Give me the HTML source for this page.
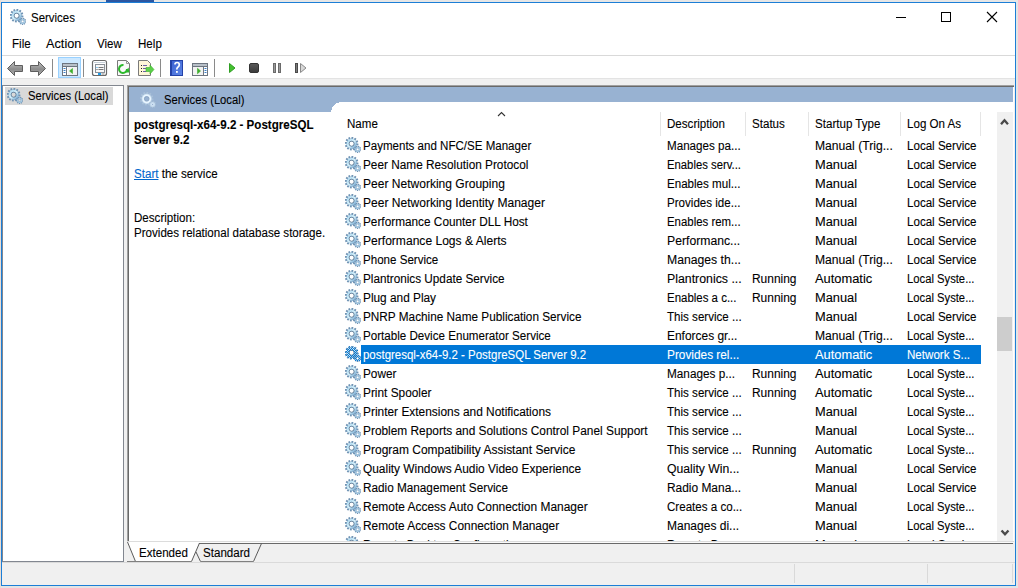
<!DOCTYPE html>
<html><head><meta charset="utf-8">
<style>
*{margin:0;padding:0;box-sizing:border-box}
html,body{width:1018px;height:588px;overflow:hidden;background:#E4E4E4;font-family:"Liberation Sans", sans-serif;font-size:12px;color:#000;-webkit-text-stroke:0.1px currentColor}
.a{position:absolute}
.t{position:absolute;white-space:nowrap;line-height:19px;transform:scaleX(.965);transform-origin:0 0}
.rt{position:absolute;white-space:nowrap;line-height:19px;height:19px;transform:scaleX(.965);transform-origin:0 0}
.sx{transform:scaleX(.965);transform-origin:0 0}
.gi{position:absolute}
</style></head><body>
<svg width="0" height="0" style="position:absolute">
<defs>
<linearGradient id="gg" x1="0.1" y1="0.1" x2="0.9" y2="0.9">
<stop offset="0" stop-color="#B4DDF2"/><stop offset="0.5" stop-color="#D4F0FB"/><stop offset="1" stop-color="#8AB8DA"/>
</linearGradient>
<symbol id="gear" viewBox="0 0 16 16">
<path d="M11.49,6.34 L13.50,6.70 L13.27,8.47 L11.23,8.30 L11.01,8.83 L12.58,10.15 L11.49,11.57 L9.81,10.40 L9.35,10.75 L10.05,12.68 L8.40,13.36 L7.53,11.51 L6.96,11.59 L6.60,13.60 L4.83,13.37 L5.00,11.33 L4.47,11.11 L3.15,12.68 L1.73,11.59 L2.90,9.91 L2.55,9.45 L0.62,10.15 L-0.06,8.50 L1.79,7.63 L1.71,7.06 L-0.30,6.70 L-0.07,4.93 L1.97,5.10 L2.19,4.57 L0.62,3.25 L1.71,1.83 L3.39,3.00 L3.85,2.65 L3.15,0.72 L4.80,0.04 L5.67,1.89 L6.24,1.81 L6.60,-0.20 L8.37,0.03 L8.20,2.07 L8.73,2.29 L10.05,0.72 L11.47,1.81 L10.30,3.49 L10.65,3.95 L12.58,3.25 L13.26,4.90 L11.41,5.77Z M8.90,6.70 A2.3,2.3 0 1 0 4.30,6.70 A2.3,2.3 0 1 0 8.90,6.70Z" fill="#6F93B4" fill-rule="evenodd"/>
<circle cx="6.6" cy="6.7" r="3.85" fill="none" stroke="url(#gg)" stroke-width="2.4"/>
<circle cx="6.6" cy="6.7" r="2.55" fill="none" stroke="#5F7890" stroke-width="0.7"/>
<path d="M15.19,12.22 L16.30,12.50 L16.05,13.75 L14.92,13.58 L14.70,13.93 L15.37,14.85 L14.37,15.65 L13.62,14.79 L13.23,14.92 L13.14,16.06 L11.87,16.03 L11.84,14.89 L11.46,14.74 L10.66,15.55 L9.71,14.71 L10.42,13.82 L10.23,13.46 L9.09,13.57 L8.90,12.31 L10.02,12.08 L10.10,11.69 L9.16,11.04 L9.82,9.95 L10.83,10.50 L11.14,10.25 L10.84,9.15 L12.05,8.74 L12.46,9.80 L12.87,9.81 L13.34,8.77 L14.53,9.24 L14.16,10.32 L14.47,10.59 L15.50,10.10 L16.11,11.22 L15.13,11.81Z M13.80,12.40 A1.2,1.2 0 1 0 11.40,12.40 A1.2,1.2 0 1 0 13.80,12.40Z" fill="#6F93B4" fill-rule="evenodd"/>
<circle cx="12.6" cy="12.4" r="1.9" fill="none" stroke="#A9CDE6" stroke-width="1.2"/>
</symbol>
<pattern id="dith" width="2" height="2" patternUnits="userSpaceOnUse"><rect x="0" y="0" width="1" height="1" fill="#0078D7"/><rect x="1" y="1" width="1" height="1" fill="#0078D7"/></pattern>
<symbol id="gearsel" viewBox="0 0 16 16">
<path d="M11.49,6.34 L13.50,6.70 L13.27,8.47 L11.23,8.30 L11.01,8.83 L12.58,10.15 L11.49,11.57 L9.81,10.40 L9.35,10.75 L10.05,12.68 L8.40,13.36 L7.53,11.51 L6.96,11.59 L6.60,13.60 L4.83,13.37 L5.00,11.33 L4.47,11.11 L3.15,12.68 L1.73,11.59 L2.90,9.91 L2.55,9.45 L0.62,10.15 L-0.06,8.50 L1.79,7.63 L1.71,7.06 L-0.30,6.70 L-0.07,4.93 L1.97,5.10 L2.19,4.57 L0.62,3.25 L1.71,1.83 L3.39,3.00 L3.85,2.65 L3.15,0.72 L4.80,0.04 L5.67,1.89 L6.24,1.81 L6.60,-0.20 L8.37,0.03 L8.20,2.07 L8.73,2.29 L10.05,0.72 L11.47,1.81 L10.30,3.49 L10.65,3.95 L12.58,3.25 L13.26,4.90 L11.41,5.77Z M8.90,6.70 A2.3,2.3 0 1 0 4.30,6.70 A2.3,2.3 0 1 0 8.90,6.70Z" fill="url(#dith)" fill-rule="evenodd"/>
<path d="M15.19,12.22 L16.30,12.50 L16.05,13.75 L14.92,13.58 L14.70,13.93 L15.37,14.85 L14.37,15.65 L13.62,14.79 L13.23,14.92 L13.14,16.06 L11.87,16.03 L11.84,14.89 L11.46,14.74 L10.66,15.55 L9.71,14.71 L10.42,13.82 L10.23,13.46 L9.09,13.57 L8.90,12.31 L10.02,12.08 L10.10,11.69 L9.16,11.04 L9.82,9.95 L10.83,10.50 L11.14,10.25 L10.84,9.15 L12.05,8.74 L12.46,9.80 L12.87,9.81 L13.34,8.77 L14.53,9.24 L14.16,10.32 L14.47,10.59 L15.50,10.10 L16.11,11.22 L15.13,11.81Z M13.80,12.40 A1.2,1.2 0 1 0 11.40,12.40 A1.2,1.2 0 1 0 13.80,12.40Z" fill="url(#dith)" fill-rule="evenodd"/>
</symbol>
<symbol id="gearg" viewBox="0 0 16 16">
<path d="M11.49,6.34 L13.50,6.70 L13.27,8.47 L11.23,8.30 L11.01,8.83 L12.58,10.15 L11.49,11.57 L9.81,10.40 L9.35,10.75 L10.05,12.68 L8.40,13.36 L7.53,11.51 L6.96,11.59 L6.60,13.60 L4.83,13.37 L5.00,11.33 L4.47,11.11 L3.15,12.68 L1.73,11.59 L2.90,9.91 L2.55,9.45 L0.62,10.15 L-0.06,8.50 L1.79,7.63 L1.71,7.06 L-0.30,6.70 L-0.07,4.93 L1.97,5.10 L2.19,4.57 L0.62,3.25 L1.71,1.83 L3.39,3.00 L3.85,2.65 L3.15,0.72 L4.80,0.04 L5.67,1.89 L6.24,1.81 L6.60,-0.20 L8.37,0.03 L8.20,2.07 L8.73,2.29 L10.05,0.72 L11.47,1.81 L10.30,3.49 L10.65,3.95 L12.58,3.25 L13.26,4.90 L11.41,5.77Z" fill="#A9C0D8"/>
<circle cx="6.7" cy="6.8" r="5.1" fill="#C4DAEE"/>
<circle cx="6.7" cy="6.8" r="3.6" fill="none" stroke="#EAF6FF" stroke-width="1.6"/>
<circle cx="6.7" cy="6.8" r="2.3" fill="#98B2D2" stroke="#7E97B5" stroke-width="0.6"/>
<path d="M15.19,12.22 L16.30,12.50 L16.05,13.75 L14.92,13.58 L14.70,13.93 L15.37,14.85 L14.37,15.65 L13.62,14.79 L13.23,14.92 L13.14,16.06 L11.87,16.03 L11.84,14.89 L11.46,14.74 L10.66,15.55 L9.71,14.71 L10.42,13.82 L10.23,13.46 L9.09,13.57 L8.90,12.31 L10.02,12.08 L10.10,11.69 L9.16,11.04 L9.82,9.95 L10.83,10.50 L11.14,10.25 L10.84,9.15 L12.05,8.74 L12.46,9.80 L12.87,9.81 L13.34,8.77 L14.53,9.24 L14.16,10.32 L14.47,10.59 L15.50,10.10 L16.11,11.22 L15.13,11.81Z" fill="#A9C0D8"/>
<circle cx="12.6" cy="12.5" r="2.5" fill="#C4DAEE"/>
<circle cx="12.6" cy="12.5" r="1.1" fill="#98B2D2" stroke="#E0EEFA" stroke-width="0.8"/>
</symbol>
</defs></svg>

<!-- desktop bits -->
<div class="a" style="left:0;top:0;width:1018px;height:2px;background:#E6E6E6"></div>
<div class="a" style="left:106px;top:0;width:48px;height:2px;background:#2C56A0"></div>
<div class="a" style="left:0;top:0;width:1px;height:588px;background:#E8DDD5"></div>

<!-- window -->
<div class="a" id="win" style="left:1px;top:2px;width:1015px;height:584px;border:1px solid #1C7ED6;background:#F0F0F0;overflow:hidden">
</div>

<!-- title+menu white -->
<div class="a" style="left:2px;top:3px;width:1013px;height:52px;background:#fff"></div>
<svg class="gi" style="left:10px;top:9px" width="16" height="16"><use href="#gear"/></svg>
<div class="t" style="left:31px;top:9px;transform:scaleX(.955)">Services</div>
<!-- window controls -->
<div class="a" style="left:896px;top:17px;width:10px;height:1px;background:#000"></div>
<div class="a" style="left:941px;top:12px;width:10px;height:10px;border:1px solid #000"></div>
<svg class="a" style="left:986px;top:11px" width="12" height="12"><path d="M1,1 L11,11 M11,1 L1,11" stroke="#000" stroke-width="1.1"/></svg>
<!-- menu -->
<div class="t" style="left:12px;top:35px;">File</div><div class="t" style="left:46px;top:35px;transform:scaleX(1.06)">Action</div><div class="t" style="left:97px;top:35px;">View</div><div class="t" style="left:138px;top:35px;">Help</div>
<div class="a" style="left:2px;top:55px;width:1013px;height:1px;background:#D9D9D9"></div>
<!-- toolbar -->
<div class="a" style="left:2px;top:56px;width:1013px;height:22px;background:#fff"></div>
<div class="a" style="left:2px;top:78px;width:1013px;height:1px;background:#E3E3E3"></div>
<svg class="a" style="left:0;top:0" width="320" height="80">
<defs>
<linearGradient id="ag" x1="0" y1="0" x2="0" y2="1"><stop offset="0" stop-color="#C4C4C4"/><stop offset="0.55" stop-color="#8C8C8C"/><stop offset="1" stop-color="#B0B0B0"/></linearGradient>
<linearGradient id="hb" x1="0" y1="0" x2="1" y2="1"><stop offset="0" stop-color="#3A5FD0"/><stop offset="1" stop-color="#5E88E8"/></linearGradient>
<linearGradient id="sg" x1="0" y1="0" x2="0" y2="1"><stop offset="0" stop-color="#5A5A5A"/><stop offset="1" stop-color="#3A3A3A"/></linearGradient>
</defs>
<!-- back / forward -->
<path d="M7.5,68.5 L14.5,61.5 L14.5,65.5 L22.5,65.5 L22.5,71.5 L14.5,71.5 L14.5,75.5 Z" fill="url(#ag)" stroke="#5E5E5E" stroke-width="1" stroke-linejoin="round"/>
<path d="M45.5,68.5 L38.5,61.5 L38.5,65.5 L30.5,65.5 L30.5,71.5 L38.5,71.5 L38.5,75.5 Z" fill="url(#ag)" stroke="#5E5E5E" stroke-width="1" stroke-linejoin="round"/>
<rect x="52" y="59" width="1" height="18" fill="#8A8A8A"/>
<!-- pressed console tree button -->
<rect x="58.5" y="57.5" width="22" height="20" fill="#CCE8FF" stroke="#99D1FF"/>
<rect x="62.5" y="63.5" width="15" height="12" fill="#fff" stroke="#6D7580"/>
<rect x="63" y="64" width="14" height="2" fill="#B8C0C8"/>
<line x1="63" y1="66.5" x2="77" y2="66.5" stroke="#6D7580"/>
<line x1="66.5" y1="67" x2="66.5" y2="75" stroke="#6D7580"/>
<rect x="68" y="67" width="9" height="8" fill="#F2F2F2"/>
<rect x="63.5" y="68" width="2" height="1" fill="#3C80C8"/><rect x="63.5" y="70" width="2" height="1" fill="#3C80C8"/><rect x="63.5" y="72" width="2" height="1" fill="#3C80C8"/>
<path d="M69.5,71 L72.5,68.5 L72.5,73.5 Z" fill="#3DAE2B" stroke="#3DAE2B" stroke-width="0.6"/>
<rect x="83" y="59" width="1" height="18" fill="#8A8A8A"/>
<!-- properties -->
<rect x="92.5" y="60.5" width="14" height="15" rx="2" fill="#fff" stroke="#6A6A6A" stroke-width="1.2"/>
<rect x="94" y="62" width="11" height="1" fill="#C8D0D8"/>
<rect x="95.5" y="64.5" width="9" height="8" fill="#F8F8F8" stroke="#8A9098"/>
<rect x="96.5" y="67" width="1" height="1" fill="#1E9BEA"/><rect x="98.5" y="67" width="5" height="1" fill="#777"/>
<rect x="96.5" y="69" width="1" height="1" fill="#555"/><rect x="98.5" y="69" width="5" height="1" fill="#777"/>
<rect x="98" y="73" width="3" height="2" fill="#1E9BEA"/><rect x="101.5" y="73" width="3" height="2" fill="#C0C0C0"/>
<!-- refresh doc -->
<path d="M117.5,60.5 L126.5,60.5 L129.5,63.5 L129.5,75.5 L117.5,75.5 Z" fill="#FAFAFA" stroke="#7A7A7A"/>
<path d="M126.5,60.5 L126.5,63.5 L129.5,63.5" fill="none" stroke="#9A9A9A"/>
<path d="M127,69 A4,4 0 1 1 123.5,65" fill="none" stroke="#2DB82D" stroke-width="2"/>
<path d="M124.5,72.5 L129.5,72.5 L128.5,67.5 Z" fill="#2DB82D"/>
<!-- export doc -->
<path d="M138.5,60.5 L147.5,60.5 L150.5,63.5 L150.5,75.5 L138.5,75.5 Z" fill="#FFF6D8" stroke="#7A7A7A"/>
<rect x="141" y="65" width="1" height="1" fill="#222"/><rect x="143" y="65" width="4" height="1" fill="#6A60A8"/>
<rect x="141" y="68" width="1" height="1" fill="#222"/><rect x="143" y="68" width="3" height="1" fill="#6A60A8"/>
<rect x="141" y="71" width="1" height="1" fill="#222"/><rect x="143" y="71" width="3" height="1" fill="#6A60A8"/>
<path d="M146,67.5 L150,67.5 L150,65 L154,69.5 L150,74 L150,71.5 L146,71.5 Z" fill="#5CD04A" stroke="#3DAE2B" stroke-width="0.6"/>
<rect x="160" y="59" width="1" height="18" fill="#8A8A8A"/>
<!-- help -->
<rect x="170" y="60" width="13" height="16" fill="url(#hb)"/>
<rect x="170" y="60" width="2" height="16" fill="#2442A8"/>
<rect x="170.5" y="60.5" width="12" height="15" fill="none" stroke="#2442A8" stroke-width="1"/>
<path d="M175,64.5 Q175,62.5 177,62.5 Q179.3,62.5 179.3,64.8 Q179.3,66.3 177.8,67.2 Q176.8,67.8 176.8,69.5" fill="none" stroke="#fff" stroke-width="1.7"/>
<rect x="176" y="71" width="1.8" height="1.8" fill="#fff"/>
<!-- action pane icon -->
<rect x="192.5" y="63.5" width="15" height="12" fill="#fff" stroke="#6D7580"/>
<rect x="193" y="64" width="14" height="2" fill="#B8C0C8"/>
<line x1="193" y1="66.5" x2="207" y2="66.5" stroke="#6D7580"/>
<line x1="203.5" y1="67" x2="203.5" y2="75" stroke="#6D7580"/>
<rect x="193" y="67" width="10" height="8" fill="#F2F2F2"/>
<rect x="204.5" y="68" width="2" height="1" fill="#3C80C8"/><rect x="204.5" y="70" width="2" height="1" fill="#3C80C8"/><rect x="204.5" y="72" width="2" height="1" fill="#3C80C8"/>
<path d="M197.5,68.3 L200.5,71 L197.5,73.7 Z" fill="#3DAE2B" stroke="#3DAE2B" stroke-width="0.6"/>
<rect x="214" y="59" width="1" height="18" fill="#8A8A8A"/>
<!-- play stop pause restart -->
<path d="M229.5,63.5 L235,68 L229.5,72.5 Z" fill="#45C030" stroke="#2E9E22" stroke-width="1" stroke-linejoin="round"/>
<rect x="249.5" y="63.5" width="9" height="9" rx="1.5" fill="url(#sg)" stroke="#333" stroke-width="1"/>
<rect x="273.5" y="63.5" width="2" height="9" fill="#9A9A9A" stroke="#6A6A6A" stroke-width="1"/>
<rect x="278.5" y="63.5" width="2" height="9" fill="#9A9A9A" stroke="#6A6A6A" stroke-width="1"/>
<rect x="295.5" y="63.5" width="2" height="9" fill="#7A7A7A" stroke="#4A4A4A" stroke-width="1"/>
<path d="M300.5,63.5 L306,68 L300.5,72.5 Z" fill="#D8D8D8" stroke="#8A8A8A" stroke-width="1" stroke-linejoin="round"/>
</svg>


<!-- left tree pane -->
<div class="a" style="left:2px;top:85px;width:122px;height:477px;background:#fff;border:1px solid #828790"></div>
<div class="a" style="left:5px;top:87px;width:108px;height:18px;background:#D9D9D9"></div>
<svg class="gi" style="left:7px;top:88px" width="16" height="16"><use href="#gear"/></svg>
<div class="t" style="left:28px;top:87px;transform:scaleX(.935)">Services (Local)</div>

<!-- right pane -->
<div class="a" style="left:127px;top:85px;width:887px;height:457px;background:#fff;border-left:1px solid #A0A0A0;border-top:1px solid #A0A0A0"></div>
<div class="a" style="left:128px;top:86px;width:886px;height:456px;border-left:1px solid #696969;border-top:1px solid #696969"></div>
<div class="a" style="left:129px;top:87px;width:884px;height:25px;background:#98B2D2"></div>
<svg class="gi" style="left:140px;top:92px" width="16" height="16"><use href="#gearg"/></svg>
<div class="t" style="left:164px;top:91px;transform:scaleX(.935)">Services (Local)</div>
<!-- detail -->
<div class="a sx" style="left:134px;top:118px;font-weight:bold;line-height:15px;white-space:nowrap">postgresql-x64-9.2 - PostgreSQL<br>Server 9.2</div>
<div class="a sx" style="left:134px;top:167px;white-space:nowrap;line-height:15px"><span style="color:#0066CC;text-decoration:underline">Start</span> the service</div>
<div class="a sx" style="left:134px;top:211px;white-space:nowrap;line-height:15px">Description:<br>Provides relational database storage.</div>

<!-- list -->
<div class="a" style="left:331px;top:102px;width:682px;height:439px;background:#fff;overflow:hidden">
<svg class="a" style="left:0;top:0" width="10" height="10" shape-rendering="crispEdges"><path d="M0,0 L8,0 L8,1 L5,1 L5,2 L4,2 L4,3 L3,3 L3,4 L2,4 L2,5 L1,5 L1,8 L0,8 Z" fill="#98B2D2"/></svg>
<svg class="a" style="left:166px;top:9px" width="9" height="7"><path d="M1,5 L4.5,1.5 L8,5" fill="none" stroke="#333" stroke-width="1.1"/></svg>
<div class="rt" style="left:16px;top:11px;line-height:23px;height:23px">Name</div>
<div class="rt" style="left:336px;top:11px;line-height:23px;height:23px">Description</div>
<div class="rt" style="left:421px;top:11px;line-height:23px;height:23px">Status</div>
<div class="rt" style="left:484px;top:11px;line-height:23px;height:23px">Startup Type</div>
<div class="rt" style="left:576px;top:11px;line-height:23px;height:23px">Log On As</div>
<div class="a" style="left:329px;top:10px;width:1px;height:24px;background:#E5E5E5"></div><div class="a" style="left:414px;top:10px;width:1px;height:24px;background:#E5E5E5"></div><div class="a" style="left:477px;top:10px;width:1px;height:24px;background:#E5E5E5"></div><div class="a" style="left:569px;top:10px;width:1px;height:24px;background:#E5E5E5"></div><div class="a" style="left:649px;top:10px;width:1px;height:24px;background:#E5E5E5"></div>
<svg class="gi" style="left:14px;top:35px" width="16" height="16"><use href="#gear"/></svg>
<div class="rt" style="left:32px;top:35px;color:#000;transform:scaleX(0.9627)">Payments and NFC/SE Manager</div>
<div class="rt" style="left:336px;top:35px;color:#000;transform:scaleX(0.9691)">Manages pa...</div>
<div class="rt" style="left:484px;top:35px;color:#000;transform:scaleX(1.0112)">Manual (Trig...</div>
<div class="rt" style="left:576px;top:35px;color:#000;transform:scaleX(0.9650)">Local Service</div>
<svg class="gi" style="left:14px;top:54px" width="16" height="16"><use href="#gear"/></svg>
<div class="rt" style="left:32px;top:54px;color:#000;transform:scaleX(0.9837)">Peer Name Resolution Protocol</div>
<div class="rt" style="left:336px;top:54px;color:#000;transform:scaleX(0.9425)">Enables serv...</div>
<div class="rt" style="left:484px;top:54px;color:#000;transform:scaleX(1.0698)">Manual</div>
<div class="rt" style="left:576px;top:54px;color:#000;transform:scaleX(0.9650)">Local Service</div>
<svg class="gi" style="left:14px;top:73px" width="16" height="16"><use href="#gear"/></svg>
<div class="rt" style="left:32px;top:73px;color:#000;transform:scaleX(1.0032)">Peer Networking Grouping</div>
<div class="rt" style="left:336px;top:73px;color:#000;transform:scaleX(0.9650)">Enables mul...</div>
<div class="rt" style="left:484px;top:73px;color:#000;transform:scaleX(1.0698)">Manual</div>
<div class="rt" style="left:576px;top:73px;color:#000;transform:scaleX(0.9650)">Local Service</div>
<svg class="gi" style="left:14px;top:92px" width="16" height="16"><use href="#gear"/></svg>
<div class="rt" style="left:32px;top:92px;color:#000;transform:scaleX(1.0029)">Peer Networking Identity Manager</div>
<div class="rt" style="left:336px;top:92px;color:#000;transform:scaleX(0.9650)">Provides ide...</div>
<div class="rt" style="left:484px;top:92px;color:#000;transform:scaleX(1.0698)">Manual</div>
<div class="rt" style="left:576px;top:92px;color:#000;transform:scaleX(0.9650)">Local Service</div>
<svg class="gi" style="left:14px;top:111px" width="16" height="16"><use href="#gear"/></svg>
<div class="rt" style="left:32px;top:111px;color:#000;transform:scaleX(0.9837)">Performance Counter DLL Host</div>
<div class="rt" style="left:336px;top:111px;color:#000;transform:scaleX(0.9516)">Enables rem...</div>
<div class="rt" style="left:484px;top:111px;color:#000;transform:scaleX(1.0698)">Manual</div>
<div class="rt" style="left:576px;top:111px;color:#000;transform:scaleX(0.9650)">Local Service</div>
<svg class="gi" style="left:14px;top:130px" width="16" height="16"><use href="#gear"/></svg>
<div class="rt" style="left:32px;top:130px;color:#000;transform:scaleX(1.0057)">Performance Logs &amp; Alerts</div>
<div class="rt" style="left:336px;top:130px;color:#000;transform:scaleX(1.0169)">Performanc...</div>
<div class="rt" style="left:484px;top:130px;color:#000;transform:scaleX(1.0698)">Manual</div>
<div class="rt" style="left:576px;top:130px;color:#000;transform:scaleX(0.9650)">Local Service</div>
<svg class="gi" style="left:14px;top:149px" width="16" height="16"><use href="#gear"/></svg>
<div class="rt" style="left:32px;top:149px;color:#000;transform:scaleX(0.9650)">Phone Service</div>
<div class="rt" style="left:336px;top:149px;color:#000;transform:scaleX(1.0169)">Manages th...</div>
<div class="rt" style="left:484px;top:149px;color:#000;transform:scaleX(1.0112)">Manual (Trig...</div>
<div class="rt" style="left:576px;top:149px;color:#000;transform:scaleX(0.9650)">Local Service</div>
<svg class="gi" style="left:14px;top:168px" width="16" height="16"><use href="#gear"/></svg>
<div class="rt" style="left:32px;top:168px;color:#000;transform:scaleX(0.9784)">Plantronics Update Service</div>
<div class="rt" style="left:336px;top:168px;color:#000;transform:scaleX(1.0269)">Plantronics ...</div>
<div class="rt" style="left:421px;top:168px;color:#000;transform:scaleX(0.9949)">Running</div>
<div class="rt" style="left:484px;top:168px;color:#000;transform:scaleX(1.0722)">Automatic</div>
<div class="rt" style="left:576px;top:168px;color:#000;transform:scaleX(0.9370)">Local Syste...</div>
<svg class="gi" style="left:14px;top:187px" width="16" height="16"><use href="#gear"/></svg>
<div class="rt" style="left:32px;top:187px;color:#000;transform:scaleX(0.9860)">Plug and Play</div>
<div class="rt" style="left:336px;top:187px;color:#000;transform:scaleX(0.9549)">Enables a c...</div>
<div class="rt" style="left:421px;top:187px;color:#000;transform:scaleX(0.9949)">Running</div>
<div class="rt" style="left:484px;top:187px;color:#000;transform:scaleX(1.0698)">Manual</div>
<div class="rt" style="left:576px;top:187px;color:#000;transform:scaleX(0.9370)">Local Syste...</div>
<svg class="gi" style="left:14px;top:206px" width="16" height="16"><use href="#gear"/></svg>
<div class="rt" style="left:32px;top:206px;color:#000;transform:scaleX(0.9818)">PNRP Machine Name Publication Service</div>
<div class="rt" style="left:336px;top:206px;color:#000;transform:scaleX(0.9650)">This service ...</div>
<div class="rt" style="left:484px;top:206px;color:#000;transform:scaleX(1.0698)">Manual</div>
<div class="rt" style="left:576px;top:206px;color:#000;transform:scaleX(0.9650)">Local Service</div>
<svg class="gi" style="left:14px;top:225px" width="16" height="16"><use href="#gear"/></svg>
<div class="rt" style="left:32px;top:225px;color:#000;transform:scaleX(0.9676)">Portable Device Enumerator Service</div>
<div class="rt" style="left:336px;top:225px;color:#000;transform:scaleX(0.9947)">Enforces gr...</div>
<div class="rt" style="left:484px;top:225px;color:#000;transform:scaleX(1.0112)">Manual (Trig...</div>
<div class="rt" style="left:576px;top:225px;color:#000;transform:scaleX(0.9370)">Local Syste...</div>
<div style="position:absolute;left:30px;top:243px;width:620px;height:19px;background:#0078D7"></div>
<svg class="gi" style="left:14px;top:244px" width="16" height="16"><use href="#gear"/></svg>
<svg class="gi" style="left:14px;top:244px" width="16" height="16"><use href="#gearsel"/></svg>
<div class="rt" style="left:32px;top:244px;color:#fff;transform:scaleX(0.9550)">postgresql-x64-9.2 - PostgreSQL Server 9.2</div>
<div class="rt" style="left:336px;top:244px;color:#fff;transform:scaleX(0.9863)">Provides rel...</div>
<div class="rt" style="left:484px;top:244px;color:#fff;transform:scaleX(1.0722)">Automatic</div>
<div class="rt" style="left:576px;top:244px;color:#fff;transform:scaleX(0.9650)">Network S...</div>
<svg class="gi" style="left:14px;top:263px" width="16" height="16"><use href="#gear"/></svg>
<div class="rt" style="left:32px;top:263px;color:#000;transform:scaleX(0.9837)">Power</div>
<div class="rt" style="left:336px;top:263px;color:#000;transform:scaleX(0.9801)">Manages p...</div>
<div class="rt" style="left:421px;top:263px;color:#000;transform:scaleX(0.9949)">Running</div>
<div class="rt" style="left:484px;top:263px;color:#000;transform:scaleX(1.0722)">Automatic</div>
<div class="rt" style="left:576px;top:263px;color:#000;transform:scaleX(0.9370)">Local Syste...</div>
<svg class="gi" style="left:14px;top:282px" width="16" height="16"><use href="#gear"/></svg>
<div class="rt" style="left:32px;top:282px;color:#000;transform:scaleX(0.9873)">Print Spooler</div>
<div class="rt" style="left:336px;top:282px;color:#000;transform:scaleX(0.9650)">This service ...</div>
<div class="rt" style="left:421px;top:282px;color:#000;transform:scaleX(0.9949)">Running</div>
<div class="rt" style="left:484px;top:282px;color:#000;transform:scaleX(1.0722)">Automatic</div>
<div class="rt" style="left:576px;top:282px;color:#000;transform:scaleX(0.9370)">Local Syste...</div>
<svg class="gi" style="left:14px;top:301px" width="16" height="16"><use href="#gear"/></svg>
<div class="rt" style="left:32px;top:301px;color:#000;transform:scaleX(0.9923)">Printer Extensions and Notifications</div>
<div class="rt" style="left:336px;top:301px;color:#000;transform:scaleX(0.9650)">This service ...</div>
<div class="rt" style="left:484px;top:301px;color:#000;transform:scaleX(1.0698)">Manual</div>
<div class="rt" style="left:576px;top:301px;color:#000;transform:scaleX(0.9370)">Local Syste...</div>
<svg class="gi" style="left:14px;top:320px" width="16" height="16"><use href="#gear"/></svg>
<div class="rt" style="left:32px;top:320px;color:#000;transform:scaleX(0.9899)">Problem Reports and Solutions Control Panel Support</div>
<div class="rt" style="left:336px;top:320px;color:#000;transform:scaleX(0.9650)">This service ...</div>
<div class="rt" style="left:484px;top:320px;color:#000;transform:scaleX(1.0698)">Manual</div>
<div class="rt" style="left:576px;top:320px;color:#000;transform:scaleX(0.9370)">Local Syste...</div>
<svg class="gi" style="left:14px;top:339px" width="16" height="16"><use href="#gear"/></svg>
<div class="rt" style="left:32px;top:339px;color:#000;transform:scaleX(0.9983)">Program Compatibility Assistant Service</div>
<div class="rt" style="left:336px;top:339px;color:#000;transform:scaleX(0.9650)">This service ...</div>
<div class="rt" style="left:421px;top:339px;color:#000;transform:scaleX(0.9949)">Running</div>
<div class="rt" style="left:484px;top:339px;color:#000;transform:scaleX(1.0722)">Automatic</div>
<div class="rt" style="left:576px;top:339px;color:#000;transform:scaleX(0.9370)">Local Syste...</div>
<svg class="gi" style="left:14px;top:358px" width="16" height="16"><use href="#gear"/></svg>
<div class="rt" style="left:32px;top:358px;color:#000;transform:scaleX(0.9917)">Quality Windows Audio Video Experience</div>
<div class="rt" style="left:336px;top:358px;color:#000;transform:scaleX(1.0162)">Quality Win...</div>
<div class="rt" style="left:484px;top:358px;color:#000;transform:scaleX(1.0698)">Manual</div>
<div class="rt" style="left:576px;top:358px;color:#000;transform:scaleX(0.9650)">Local Service</div>
<svg class="gi" style="left:14px;top:377px" width="16" height="16"><use href="#gear"/></svg>
<div class="rt" style="left:32px;top:377px;color:#000;transform:scaleX(0.9794)">Radio Management Service</div>
<div class="rt" style="left:336px;top:377px;color:#000;transform:scaleX(0.9930)">Radio Mana...</div>
<div class="rt" style="left:484px;top:377px;color:#000;transform:scaleX(1.0698)">Manual</div>
<div class="rt" style="left:576px;top:377px;color:#000;transform:scaleX(0.9650)">Local Service</div>
<svg class="gi" style="left:14px;top:396px" width="16" height="16"><use href="#gear"/></svg>
<div class="rt" style="left:32px;top:396px;color:#000;transform:scaleX(0.9963)">Remote Access Auto Connection Manager</div>
<div class="rt" style="left:336px;top:396px;color:#000;transform:scaleX(0.9650)">Creates a co...</div>
<div class="rt" style="left:484px;top:396px;color:#000;transform:scaleX(1.0698)">Manual</div>
<div class="rt" style="left:576px;top:396px;color:#000;transform:scaleX(0.9370)">Local Syste...</div>
<svg class="gi" style="left:14px;top:415px" width="16" height="16"><use href="#gear"/></svg>
<div class="rt" style="left:32px;top:415px;color:#000;transform:scaleX(0.9900)">Remote Access Connection Manager</div>
<div class="rt" style="left:336px;top:415px;color:#000;transform:scaleX(1.0010)">Manages di...</div>
<div class="rt" style="left:484px;top:415px;color:#000;transform:scaleX(1.0698)">Manual</div>
<div class="rt" style="left:576px;top:415px;color:#000;transform:scaleX(0.9370)">Local Syste...</div>
<svg class="gi" style="left:14px;top:434px" width="16" height="16"><use href="#gear"/></svg>
<div class="rt" style="left:32px;top:434px;color:#000;transform:scaleX(0.9650)">Remote Desktop Configuration</div>
<div class="rt" style="left:336px;top:434px;color:#000;transform:scaleX(0.9650)">Remote Des...</div>
<div class="rt" style="left:484px;top:434px;color:#000;transform:scaleX(1.0698)">Manual</div>
<div class="rt" style="left:576px;top:434px;color:#000;transform:scaleX(0.9650)">Local Service</div>
<!-- scrollbar -->
<div class="a" style="left:666px;top:10px;width:16px;height:429px;background:#F0F0F0"></div>
<div class="a" style="left:666px;top:215px;width:15px;height:34px;background:#CDCDCD"></div>
<svg class="a" style="left:669px;top:15px" width="10" height="9"><path d="M1.8,6.3 L4.5,3.3 L7.2,6.3" fill="none" stroke="#4A4A4A" stroke-width="2.3" stroke-linecap="square"/></svg>
<svg class="a" style="left:669px;top:427px" width="10" height="9"><path d="M2.3,2.3 L5,5.3 L7.7,2.3" fill="none" stroke="#4A4A4A" stroke-width="2.3" stroke-linecap="square"/></svg>
</div>

<!-- tabs -->
<svg class="a" style="left:127px;top:541px" width="887" height="22">
<rect x="0" y="0" width="887" height="1" fill="#DCDCDC"/>
<rect x="0" y="1" width="887" height="1" fill="#FAFAFA"/>
<path d="M72,2 L134.5,2 L126.5,20 L73.5,20 L69,11 Z" fill="#F0F0F0"/>
<path d="M0,1 L72.5,1 L64.5,20 L8.5,20 Z" fill="#fff"/>
<path d="M72,2.5 L886,2.5" stroke="#696969" stroke-width="1"/>
<path d="M0.5,1 L8.5,20.5" stroke="#5A5A5A" stroke-width="1"/>
<path d="M72.5,2 L64.5,20.5" stroke="#5A5A5A" stroke-width="1"/>
<path d="M69,11 L73.5,20.5" stroke="#5A5A5A" stroke-width="1"/>
<path d="M134.5,2.5 L126.5,20.5" stroke="#5A5A5A" stroke-width="1"/>
<path d="M0,20.5 L64.5,20.5 M73.5,20.5 L126.5,20.5" stroke="#808080" stroke-width="1"/>
</svg>
<div class="t" style="left:139px;top:544px;">Extended</div><div class="t" style="left:203px;top:544px;">Standard</div>

<!-- status bar -->
<div class="a" style="left:2px;top:562px;width:1013px;height:1px;background:#DADADA"></div>
<div class="a" style="left:794px;top:564px;width:1px;height:19px;background:#D9D9D9"></div>
<div class="a" style="left:927px;top:564px;width:1px;height:19px;background:#D9D9D9"></div>
<div class="a" style="left:1012px;top:564px;width:1px;height:19px;background:#D9D9D9"></div>

</body></html>
